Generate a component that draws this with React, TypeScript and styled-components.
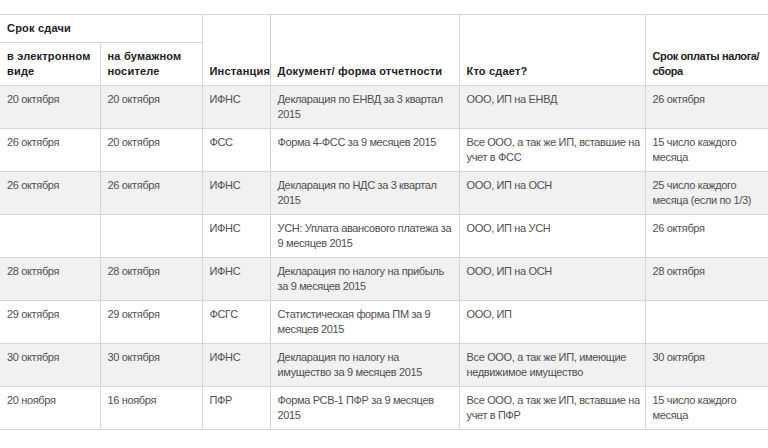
import * as React from 'react'
import styled, { createGlobalStyle } from 'styled-components'

const GlobalStyle = createGlobalStyle`
  html, body {
    margin: 0;
    padding: 0;
    background: #fff;
    font-family: 'Liberation Sans', Arial, sans-serif;
  }
`

const Page = styled.div`
  width: 768px;
  height: 448px;
  padding-top: 14px;
  box-sizing: border-box;
  overflow: hidden;
`

const Table = styled.table`
  width: 768px;
  table-layout: fixed;
  border-collapse: collapse;
  font-size: 11px;
  line-height: 15px;
  color: #505050;
`

const Head = styled.th<{ $align?: 'middle' | 'bottom'; $tight?: boolean }>`
  text-align: left;
  font-weight: bold;
  color: #222;
  letter-spacing: ${p => (p.$tight ? '-0.4px' : '0.2px')};
  white-space: pre;
  vertical-align: ${p => p.$align ?? 'bottom'};
  padding: 0 0 ${p => (p.$align === 'middle' ? 0 : 6)}px 7px;
  border: 1px solid #d6d6d6;

  &:first-child {
    border-left: none;
  }
  &:last-child {
    border-right: none;
  }
`

const Row = styled.tr<{ $shaded?: boolean }>`
  height: 43px;
  background: ${p => (p.$shaded ? '#f1f1f1' : '#fff')};
`

const HeadRow = styled.tr<{ $height: number }>`
  height: ${p => p.$height}px;
`

const Cell = styled.td`
  vertical-align: top;
  white-space: pre;
  padding: 6px 0 0 7px;
  letter-spacing: -0.35px;
  border: 1px solid #d6d6d6;

  &:first-child {
    border-left: none;
  }
  &:last-child {
    border-right: none;
  }
`

const rows = [
  ['20 октября', '20 октября', 'ИФНС', 'Декларация по ЕНВД за 3 квартал\n2015', 'ООО, ИП на ЕНВД', '26 октября'],
  ['26 октября', '20 октября', 'ФСС', 'Форма 4-ФСС за 9 месяцев 2015', 'Все ООО, а так же ИП, вставшие на\nучет в ФСС', '15 число каждого\nмесяца'],
  ['26 октября', '26 октября', 'ИФНС', 'Декларация по НДС за 3 квартал\n2015', 'ООО, ИП на ОСН', '25 число каждого\nмесяца (если по 1/3)'],
  ['', '', 'ИФНС', 'УСН: Уплата авансового платежа за\n9 месяцев 2015', 'ООО, ИП на УСН', '26 октября'],
  ['28 октября', '28 октября', 'ИФНС', 'Декларация по налогу на прибыль\nза 9 месяцев 2015', 'ООО, ИП на ОСН', '28 октября'],
  ['29 октября', '29 октября', 'ФСГС', 'Статистическая форма ПМ за 9\nмесяцев 2015', 'ООО, ИП', ''],
  ['30 октября', '30 октября', 'ИФНС', 'Декларация по налогу на\nимущество за 9 месяцев 2015', 'Все ООО, а так же ИП, имеющие\nнедвижимое имущество', '30 октября'],
  ['20 ноября', '16 ноября', 'ПФР', 'Форма РСВ-1 ПФР за 9 месяцев\n2015', 'Все ООО, а так же ИП, вставшие на\nучет в ПФР', '15 число каждого\nмесяца'],
]

const widths = [100, 102, 68, 189, 186, 123]

export default function App() {
  return (
    <Page>
      <GlobalStyle />
      <Table>
        <colgroup>
          {widths.map((w, i) => (
            <col key={i} style={{ width: w }} />
          ))}
        </colgroup>
        <thead>
          <HeadRow $height={28}>
            <Head colSpan={2} $align="middle">
              Срок сдачи
            </Head>
            <Head rowSpan={2}>Инстанция</Head>
            <Head rowSpan={2}>Документ/ форма отчетности</Head>
            <Head rowSpan={2}>Кто сдает?</Head>
            <Head rowSpan={2} $tight>
              {'Срок оплаты налога/\nсбора'}
            </Head>
          </HeadRow>
          <HeadRow $height={43}>
            <Head>{'в электронном\nвиде'}</Head>
            <Head>{'на бумажном\nносителе'}</Head>
          </HeadRow>
        </thead>
        <tbody>
          {rows.map((r, i) => (
            <Row key={i} $shaded={i % 2 === 0}>
              {r.map((c, j) => (
                <Cell key={j}>{c}</Cell>
              ))}
            </Row>
          ))}
        </tbody>
      </Table>
    </Page>
  )
}
